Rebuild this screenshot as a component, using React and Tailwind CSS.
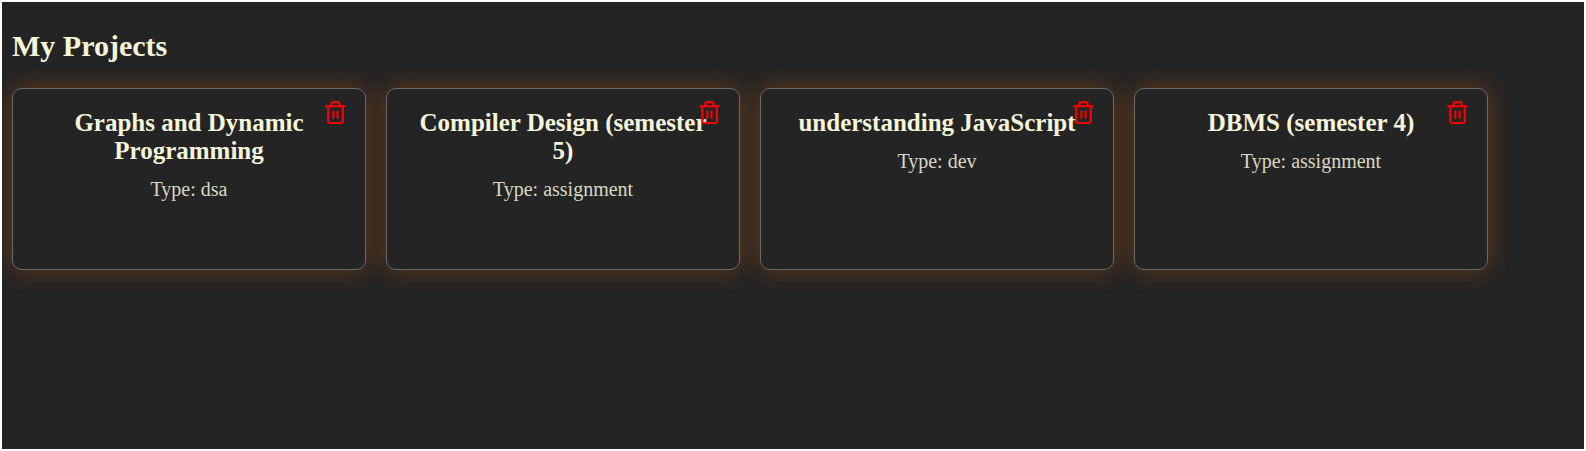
import { FiTrash2 } from "react-icons/fi";

const projects = [
  { title: "Graphs and Dynamic Programming", type: "dsa" },
  { title: "Compiler Design (semester 5)", type: "assignment" },
  { title: "understanding JavaScript", type: "dev" },
  { title: "DBMS (semester 4)", type: "assignment" },
];

function ProjectCard({ title, type }) {
  return (
    <article className="relative h-[182px] w-[354px] rounded-[10px] border border-[#6b6b6b] bg-[#242424] px-5 pt-5 text-center shadow-[0_0_25px_rgba(255,111,0,0.3)]">
      <h2 className="text-[25px] leading-7 font-bold">{title}</h2>
      <p className="mt-[13px] text-[20px] leading-[23px] text-[#d8d8c3]">Type: {type}</p>
      <button aria-label="Delete project" className="absolute top-[11px] right-[17px] text-[#ff0000]">
        <FiTrash2 size={25} />
      </button>
    </article>
  );
}

export default function App() {
  return (
    <main className="h-[451px] overflow-hidden border-2 border-white bg-[#242424] px-2.5 pt-[27px] font-['Liberation_Serif',serif] text-[#f5f5dc]">
      <h1 className="text-[30px] leading-[34px] font-bold">My Projects</h1>
      <section className="mt-[25px] flex gap-5">
        {projects.map((project) => (
          <ProjectCard key={project.title} {...project} />
        ))}
      </section>
    </main>
  );
}
